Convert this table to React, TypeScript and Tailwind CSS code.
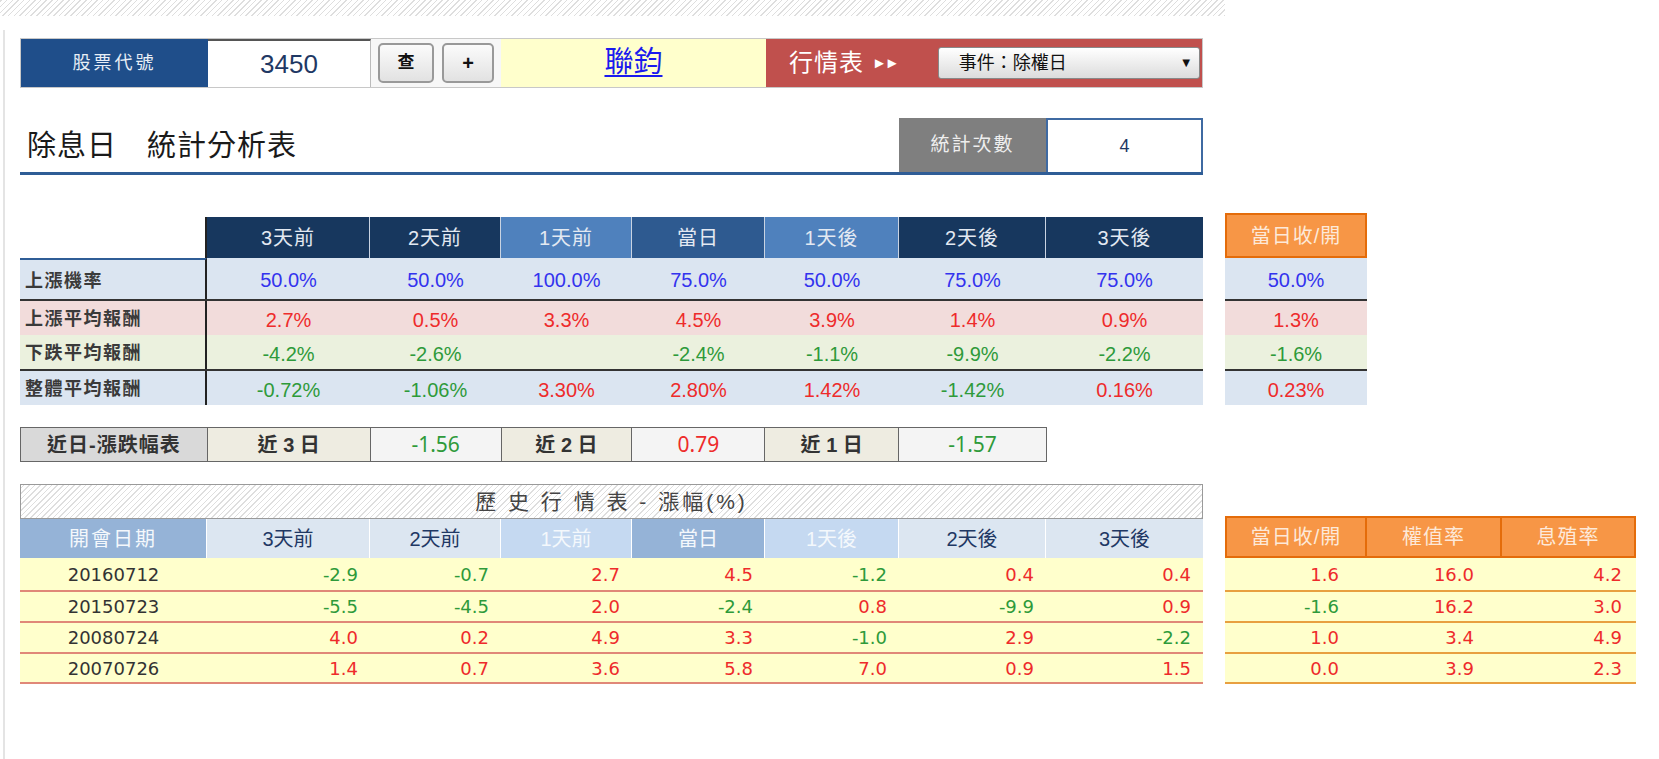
import React from 'react';

const cjk = "font-['Liberation_Sans','Noto_Sans_CJK_TC',sans-serif]";
const verd = "font-['DejaVu_Sans','Noto_Sans_CJK_TC',sans-serif]";

const colW = ['w-[163px]', 'w-[131px]', 'w-[131px]', 'w-[133px]', 'w-[134px]', 'w-[147px]', 'w-[157px]'];

const statHead = [
  { t: '3天前', c: 'bg-[#17375e]' },
  { t: '2天前', c: 'bg-[#17375e]' },
  { t: '1天前', c: 'bg-[#4f81bd]' },
  { t: '當日', c: 'bg-[#2e5a90]' },
  { t: '1天後', c: 'bg-[#4f81bd]' },
  { t: '2天後', c: 'bg-[#17375e]' },
  { t: '3天後', c: 'bg-[#17375e]' },
];

const statRows = [
  { label: '上漲機率', bg: 'bg-[#dbe5f1]', h: 'h-[41px]', line: '', vals: ['50.0%', '50.0%', '100.0%', '75.0%', '50.0%', '75.0%', '75.0%'], side: '50.0%', blue: true },
  { label: '上漲平均報酬', bg: 'bg-[#f2dcdb]', h: 'h-[36px]', line: 'border-t-2 border-[#333]', vals: ['2.7%', '0.5%', '3.3%', '4.5%', '3.9%', '1.4%', '0.9%'], side: '1.3%' },
  { label: '下跌平均報酬', bg: 'bg-[#ebf1de]', h: 'h-[34px]', line: '', vals: ['-4.2%', '-2.6%', '', '-2.4%', '-1.1%', '-9.9%', '-2.2%'], side: '-1.6%' },
  { label: '整體平均報酬', bg: 'bg-[#dbe5f1]', h: 'h-[36px]', line: 'border-t-2 border-[#333]', vals: ['-0.72%', '-1.06%', '3.30%', '2.80%', '1.42%', '-1.42%', '0.16%'], side: '0.23%' },
];

const tone = (v: string, blue?: boolean) =>
  blue ? 'text-[#3333ee]' : v.startsWith('-') ? 'text-[#2e9a3a]' : 'text-[#ee2b2b]';

const histHead = [
  { t: '3天前', c: 'bg-[#dce6f1] text-[#1f3864]' },
  { t: '2天前', c: 'bg-[#dce6f1] text-[#1f3864]' },
  { t: '1天前', c: 'bg-[#c5d9f1] text-[#f4f8fc]' },
  { t: '當日', c: 'bg-[#95b3d7] text-[#f4f8fc]' },
  { t: '1天後', c: 'bg-[#c5d9f1] text-[#f4f8fc]' },
  { t: '2天後', c: 'bg-[#dce6f1] text-[#1f3864]' },
  { t: '3天後', c: 'bg-[#dce6f1] text-[#1f3864]' },
];

const history = [
  { d: '20160712', h: 'h-[34px]', v: ['-2.9', '-0.7', '2.7', '4.5', '-1.2', '0.4', '0.4'], s: ['1.6', '16.0', '4.2'] },
  { d: '20150723', h: 'h-[31px]', v: ['-5.5', '-4.5', '2.0', '-2.4', '0.8', '-9.9', '0.9'], s: ['-1.6', '16.2', '3.0'] },
  { d: '20080724', h: 'h-[31px]', v: ['4.0', '0.2', '4.9', '3.3', '-1.0', '2.9', '-2.2'], s: ['1.0', '3.4', '4.9'] },
  { d: '20070726', h: 'h-[30px]', v: ['1.4', '0.7', '3.6', '5.8', '7.0', '0.9', '1.5'], s: ['0.0', '3.9', '2.3'] },
];

const hatch = 'bg-[repeating-linear-gradient(-45deg,#dedede_0px,#dedede_1px,#ffffff_1px,#ffffff_4px)]';

export default function App() {
  return (
    <div className={`w-[1659px] h-[759px] bg-white overflow-hidden ${cjk}`}>
      <div className={`w-[1225px] h-[16px] ${hatch}`} />

      <div className="ml-[3px] mt-[14px] border-l-2 border-[#e4e4e4] pl-[15px] pt-[8px] h-[729px]">
        {/* top bar */}
        <div className="flex w-[1183px] h-[50px] border border-[#c8c8c8]">
          <div className="w-[187px] bg-[#1f4e8a] flex items-center justify-center text-[18px] text-[#e8eef6] tracking-[3px]">
            股票代號
          </div>
          <div className="w-[163px] bg-white border-t-2 border-[#555] border-r border-r-[#bbb] flex items-center justify-center text-[26px] text-[#1f3864]">
            3450
          </div>
          <div className="w-[130px] bg-[#f7f7f7] flex items-center gap-[8px] pl-[7px]">
            <button className="w-[56px] h-[40px] rounded-[5px] border-2 border-[#999] bg-[linear-gradient(#fbfbfb,#e2e2e2)] text-[17px] font-bold text-[#111]">
              查
            </button>
            <button className="w-[52px] h-[40px] rounded-[5px] border-2 border-[#999] bg-[linear-gradient(#fbfbfb,#e2e2e2)] text-[20px] font-bold text-[#111]">
              +
            </button>
          </div>
          <div className="w-[265px] bg-[#ffffcc] flex items-center justify-center">
            <span className="text-[29px] text-[#1a1aee] underline underline-offset-[3px]">聯鈞</span>
          </div>
          <div className="flex-1 bg-[#c0504d] flex items-center pl-[23px]">
            <span className="text-[24px] text-white tracking-[1px]">行情表</span>
            <span className="ml-[8px] text-[15px] text-white tracking-[-2px]">►►</span>
            <div className="ml-[40px] w-[262px] h-[32px] rounded-[3px] border border-[#888] bg-[linear-gradient(#ffffff,#dcdcdc)] flex items-center justify-between pl-[20px] pr-[6px]">
              <span className="text-[18px] text-[#111]">事件：除權日</span>
              <span className="text-[13px] text-[#111]">▼</span>
            </div>
          </div>
        </div>

        {/* title */}
        <div className="mt-[30px] w-[1183px] flex items-end border-b-[3px] border-[#2f5d96]">
          <div className="flex-1 pl-[7px] pb-[4px] text-[29px] text-[#1a1a1a] tracking-[1px]">除息日　統計分析表</div>
          <div className="w-[147px] h-[54px] bg-[#7f7f7f] flex items-center justify-center text-[19px] text-[#eeeeee] tracking-[2px]">
            統計次數
          </div>
          <div className="w-[157px] h-[54px] bg-white border-2 border-b-0 border-[#3f6aa2] flex items-center justify-center text-[18px] text-[#1f3864]">
            4
          </div>
        </div>

        {/* stats */}
        <div className="mt-[38px] flex items-start">
          <div className="w-[1183px] mt-[4px]">
            <div className="flex h-[41px]">
              <div className="w-[187px] bg-white border-r-2 border-[#222]" />
              {statHead.map((h, i) => (
                <div
                  key={h.t}
                  className={`${colW[i]} ${h.c} ${i < 6 ? 'border-r border-[#c9d3e2]' : ''} flex items-center justify-center text-[20px] tracking-[1px] text-[#e3e9f2]`}
                >
                  {h.t}
                </div>
              ))}
            </div>
            {statRows.map((r, ri) => (
              <div key={r.label} className={`flex ${r.h} ${r.bg} ${r.line}`}>
                <div
                  className={`w-[187px] border-r-2 border-r-[#222] ${ri === 0 ? 'border-t-2 border-t-[#2f5d96]' : ''} flex items-center pl-[5px] pt-[3px] text-[18px] font-bold text-[#3a3a3a] tracking-[1.5px]`}
                >
                  {r.label}
                </div>
                {r.vals.map((v, i) => (
                  <div key={i} className={`${colW[i]} flex items-center justify-center pt-[3px] text-[20px] ${tone(v, r.blue)}`}>
                    {v}
                  </div>
                ))}
              </div>
            ))}
          </div>

          <div className="ml-[22px] w-[142px]">
            <div className="h-[45px] bg-[#f79646] border-2 border-[#e46c0a] flex items-center justify-center text-[20px] text-[#fde9d9] tracking-[1px]">
              當日收/開
            </div>
            {statRows.map((r) => (
              <div key={r.label} className={`${r.h} ${r.bg} ${r.line} flex items-center justify-center pt-[3px] text-[20px] ${tone(r.side, r.blue)}`}>
                {r.side}
              </div>
            ))}
          </div>
        </div>

        {/* recent */}
        <div className="mt-[22px] flex w-[1027px] h-[35px] border border-[#666] text-[20px]">
          <div className="w-[187px] bg-[#d9d9d9] border-r border-[#666] flex items-center justify-center font-bold text-[#333] tracking-[1px]">
            近日-漲跌幅表
          </div>
          {[
            { t: '近 3 日', k: 'l' },
            { t: '-1.56', k: 'v' },
            { t: '近 2 日', k: 'l' },
            { t: '0.79', k: 'v' },
            { t: '近 1 日', k: 'l' },
            { t: '-1.57', k: 'v' },
          ].map((c, i) => (
            <div
              key={i}
              className={`${colW[i]} ${i < 5 ? 'border-r border-[#666]' : ''} flex items-center justify-center ${
                c.k === 'l' ? 'bg-[#eeece1] font-bold text-[#333]' : `bg-[#f4f4f4] font-['Noto_Sans',sans-serif] text-[21px] ${tone(c.t)}`
              }`}
            >
              {c.t}
            </div>
          ))}
        </div>

        {/* history */}
        <div className="mt-[22px] flex items-end">
          <div className="w-[1183px]">
            <div className={`h-[35px] border border-[#9a9a9a] ${hatch} flex items-center justify-center text-[21px] tracking-[3px] text-[#444]`}>
              歷 史 行 情 表 - 漲幅(%)
            </div>
            <div className="flex h-[39px] text-[20px]">
              <div className="w-[187px] bg-[#95b3d7] border-r border-white flex items-center justify-center text-[#f4f8fc] tracking-[2px]">
                開會日期
              </div>
              {histHead.map((h, i) => (
                <div key={h.t} className={`${colW[i]} ${h.c} ${i < 6 ? 'border-r border-white' : ''} flex items-center justify-center`}>
                  {h.t}
                </div>
              ))}
            </div>
            {history.map((r) => (
              <div key={r.d} className={`flex ${r.h} bg-[#ffffcc] border-b-2 border-[#e08878] text-[18px] ${verd}`}>
                <div className="w-[187px] flex items-center justify-center text-[#333]">{r.d}</div>
                {r.v.map((v, i) => (
                  <div key={i} className={`${colW[i]} flex items-center justify-end pr-[12px] ${tone(v)}`}>
                    {v}
                  </div>
                ))}
              </div>
            ))}
          </div>

          <div className="ml-[22px] w-[411px]">
            <div className="flex h-[42px] bg-[#f79646] border-2 border-[#e46c0a] text-[20px] text-[#fde9d9] tracking-[1px]">
              <div className="w-[140px] border-r-2 border-[#e46c0a] flex items-center justify-center">當日收/開</div>
              <div className="w-[135px] border-r-2 border-[#e46c0a] flex items-center justify-center">權值率</div>
              <div className="flex-1 flex items-center justify-center">息殖率</div>
            </div>
            {history.map((r) => (
              <div key={r.d} className={`flex ${r.h} bg-[#ffffcc] border-b-2 border-[#e8a040] text-[18px] ${verd}`}>
                <div className={`w-[142px] flex items-center justify-end pr-[28px] ${tone(r.s[0])}`}>{r.s[0]}</div>
                <div className={`w-[135px] flex items-center justify-end pr-[28px] ${tone(r.s[1])}`}>{r.s[1]}</div>
                <div className={`flex-1 flex items-center justify-end pr-[14px] ${tone(r.s[2])}`}>{r.s[2]}</div>
              </div>
            ))}
          </div>
        </div>
      </div>
    </div>
  );
}
